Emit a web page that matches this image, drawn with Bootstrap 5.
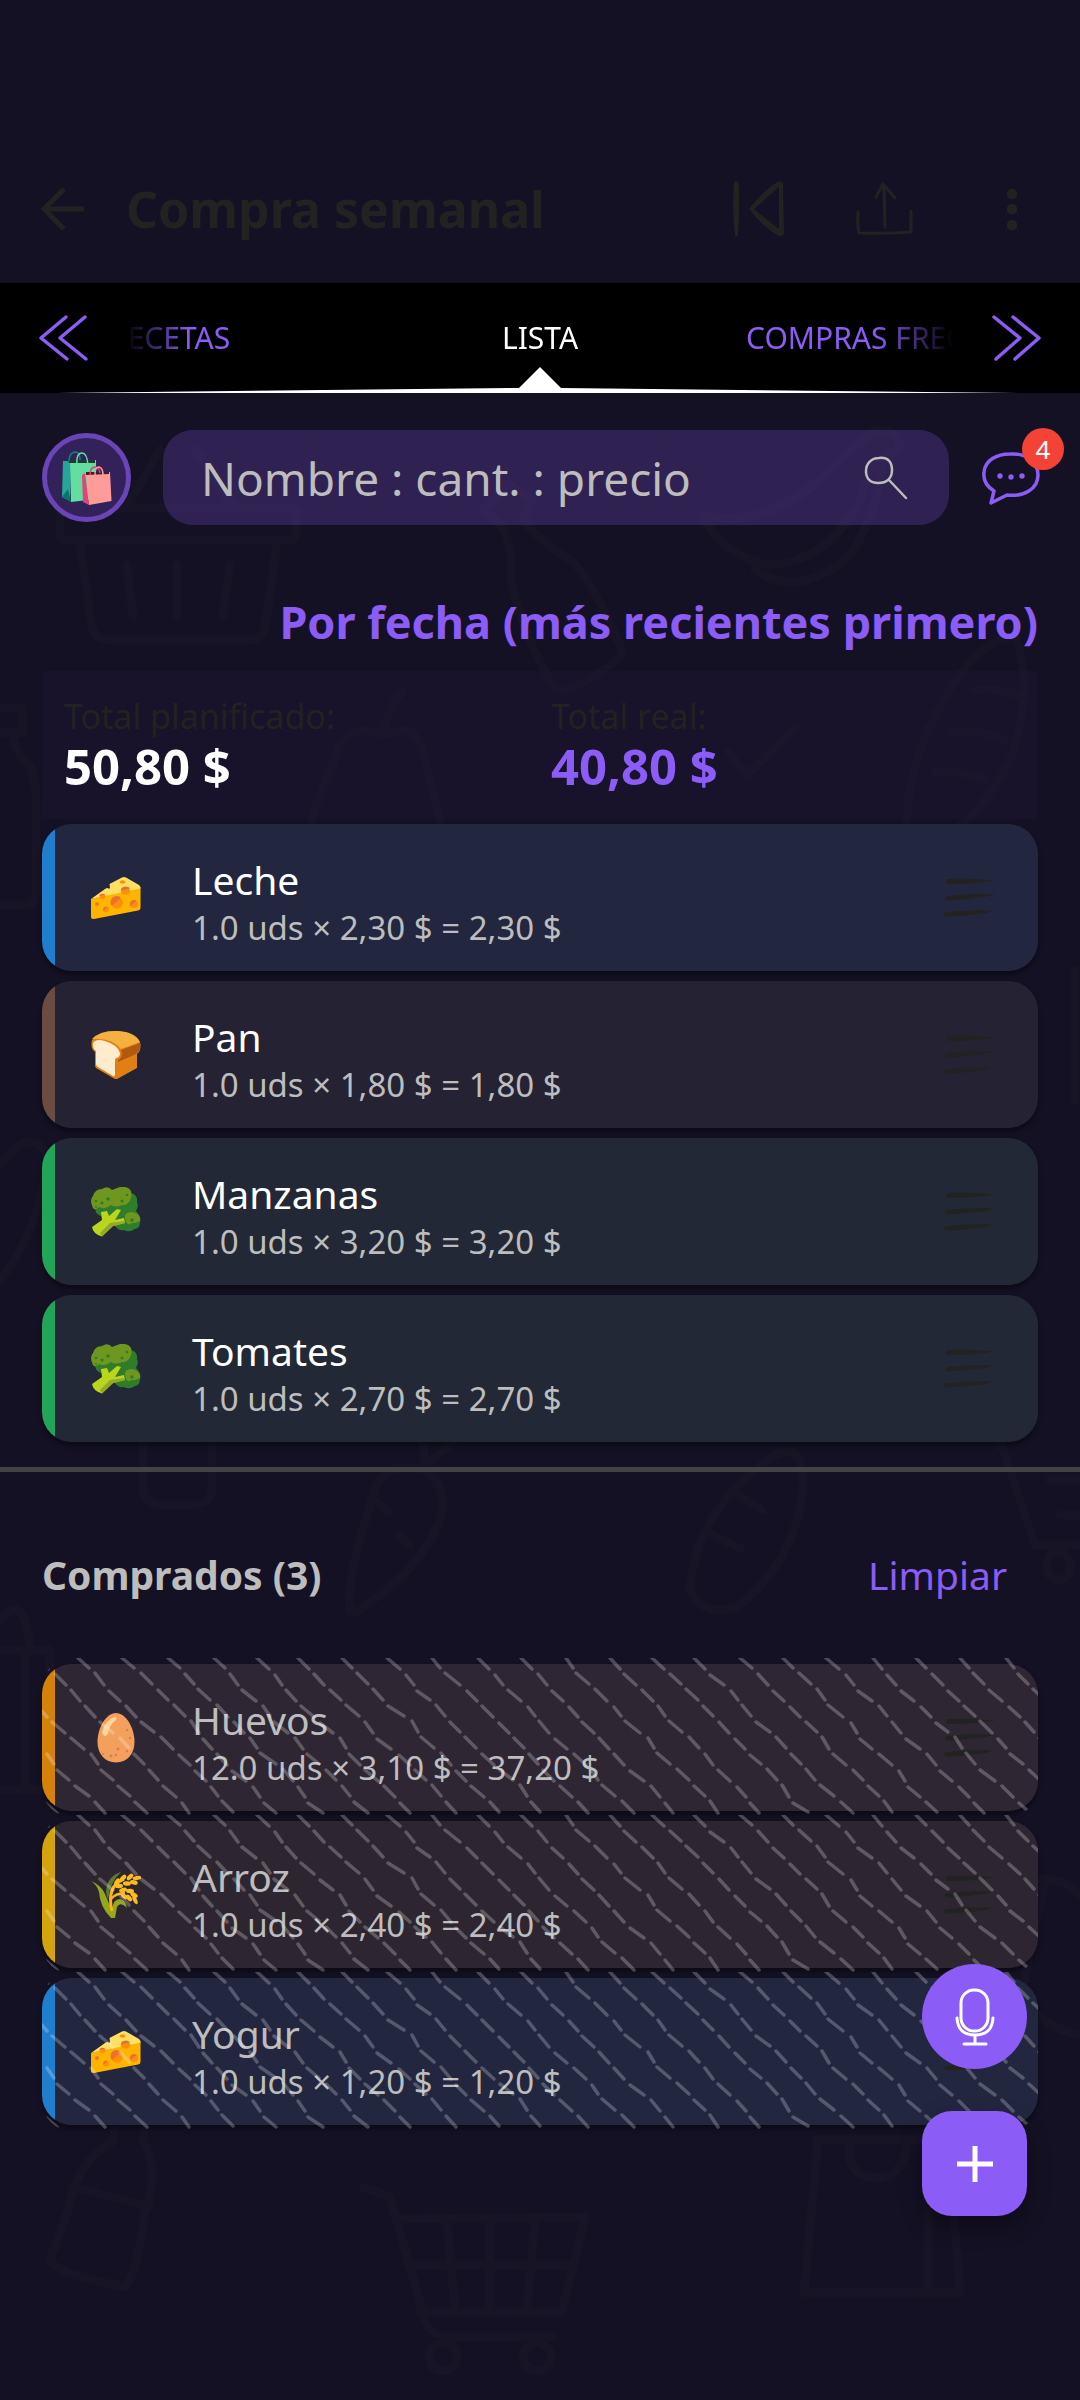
<!DOCTYPE html>
<html lang="es">
<head>
<meta charset="utf-8">
<meta name="viewport" content="width=device-width, initial-scale=1">
<title>Compra semanal</title>
<link href="https://cdn.jsdelivr.net/npm/bootstrap@5.3.0/dist/css/bootstrap.min.css" rel="stylesheet">
<style>
  :root { --violet: #8b5cf6; --ink: #222220; --muted: #bdbdbd; }
  body { background: #141124; color: #fff; font-family: "Noto Sans", "Open Sans", sans-serif; min-height: 100vh; }
  .plain { background: none; border: 0; padding: 0; display: flex; color: inherit; }
  svg { display: block; flex: none; }
  .doodles { position: absolute; inset: 0; z-index: -1; overflow: hidden; }
  .doodles svg { stroke: #171426; stroke-width: 9; fill: none; stroke-linecap: round; stroke-linejoin: round; }

  .topbar { padding: 135px 60px 0 40px; height: 283px; color: var(--ink); background: #141124; }
  .topbar h1 { font-size: 50px; line-height: 64px; font-weight: 700; margin: 0 0 0 38px; }
  .topbar .actions { gap: 64px; }

  .tabstrip { background: #000; height: 110px; padding: 0 36px; position: relative; color: var(--violet); }
  .tabview { overflow: hidden; margin: 0 34px; font-size: 30px; line-height: 40px; white-space: nowrap;
    -webkit-mask-image: linear-gradient(90deg, transparent, #000 64px, #000 calc(100% - 80px), transparent);
    mask-image: linear-gradient(90deg, transparent, #000 64px, #000 calc(100% - 80px), transparent); }
  .tabview a { color: var(--violet); text-decoration: none; }
  .tabview a.current { color: #fff; }
  .tabside { flex: 1 1 0; min-width: 0; }
  .tabside.before a { margin-left: -17px; }
  .tabside.after a { margin-left: 168px; }
  .marker { position: absolute; left: 0; bottom: 0; width: 100%; height: 26px; }

  .content-pad { padding-left: 42px; padding-right: 42px; }
  .searchrow { padding: 37px 40px 0 42px; }
  .avatar { width: 89px; height: 89px; border: 5px solid #6a45b8; border-radius: 50%; background: #33225a; align-items: center; justify-content: center; }
  .searchbox { height: 95px; border-radius: 30px; background: #8b5cf63a; margin: 0 31px 0 32px; padding: 0 40px 0 38px; }
  .searchbox input { background: none; border: 0; outline: 0; min-width: 0; color: #fff; font-size: 46px; line-height: 60px; padding: 0; }
  .searchbox input::placeholder { color: var(--muted); opacity: 1; }
  .count { position: absolute; top: -22px; right: -24px; width: 42px; height: 42px; border-radius: 50%; background: #f44336; color: #fff; font-size: 26px; line-height: 42px; text-align: center; }
  .sortline { margin-top: 67px; font-size: 45px; line-height: 60px; font-weight: 700; color: var(--violet); justify-content: flex-end; width: 100%; }

  .totals { margin-top: 19px; padding: 23px 22px 25px; background: #8b3cd609; display: grid; grid-template-columns: 1fr 1fr; column-gap: 22px; }
  .totals dt { font-size: 34px; line-height: 44px; font-weight: 400; color: var(--ink); }
  .totals dd { font-size: 49px; line-height: 56px; font-weight: 700; margin: 0; }
  .totals .real { color: var(--violet); }

  .items { gap: 10px; margin: 0; padding: 0; list-style: none; }
  .pending { margin-top: 5px; }
  .item { position: relative; border-radius: 30px; box-shadow: 0 4px 5px #0006; background: linear-gradient(90deg, var(--strip) 13px, var(--face) 13px); padding: 0 42px 0 49px; }
  .item .words { padding: 31px 0 22px 51px; }
  .item h2 { font-size: 39px; line-height: 50px; font-weight: 400; margin: 0 0 2px; }
  .item p { font-size: 33px; line-height: 42px; margin: 0; color: var(--muted); }
  .bought h2 { color: var(--muted); }
  .dairy { --strip: #207ece; --face: #22263f; }
  .bakery { --strip: #6a4c43; --face: #252234; }
  .greens { --strip: #22a558; --face: #222835; }
  .eggs { --strip: #d5820b; --face: #2e2632; }
  .grain { --strip: #d4a40f; --face: #2d2631; }
  .hatch { position: absolute; left: 0; right: 0; top: -6px; bottom: -6px; border-radius: 30px; overflow: hidden; pointer-events: none; }
  .hatch svg { width: 100%; height: 100%; }
  .split { border: 0; height: 5px; margin: 25px 0 0; background: #444244; opacity: 1; }
  .boughthead { margin-top: 77px; margin-bottom: 63px; font-size: 39px; line-height: 52px; }
  .boughthead h3 { font-size: 39px; line-height: 52px; font-weight: 700; color: var(--muted); margin: 0; }
  .boughthead button { color: var(--violet); margin-right: 31px; }

  .fabs { position: fixed; right: 53px; bottom: 184px; gap: 42px; z-index: 5; }
  .fabs button { width: 105px; height: 105px; border: 0; padding: 0; background: var(--violet); display: flex; align-items: center; justify-content: center; border-radius: 30px; box-shadow: 0 10px 22px #0006; }
  .fabs .voice { border-radius: 50%; box-shadow: none; }
</style>
<script src="https://cdn.jsdelivr.net/npm/bootstrap@5.3.0/dist/js/bootstrap.bundle.min.js" defer></script>
</head>
<body class="position-relative">

<svg width="0" height="0" class="position-absolute" aria-hidden="true">
  <symbol id="cheese" viewBox="0 0 50 50">
    <path d="M0 26 L0 44 Q0 46.500 3 46 L47 37.500 Q49.500 37 49.500 35 V14z" fill="#ffb400"/>
    <path d="M0 26 L14 16 Q17 14 18 16 L19 15 L18.500 11 L31 4.500 Q33 3.500 35 4.500 L48 12 Q49.500 13 49.500 15.500z" fill="#ffe063"/>
    <ellipse cx="31.500" cy="9" rx="2.800" ry="1.800" fill="#ff8f0a"/>
    <ellipse cx="11.500" cy="23.500" rx="3" ry="2.500" fill="#ff8f0a"/><path d="M8.500 23 a3 2.500 0 0 1 5.500-1.200z" fill="#e0703a"/>
    <ellipse cx="34.500" cy="18" rx="4.800" ry="3.700" fill="#ff8f0a"/><path d="M30 17.500 a4.800 3.700 0 0 1 9-2z" fill="#e0703a"/>
    <circle cx="26" cy="30" r="5.800" fill="#ff8f0a"/><path d="M21 33 a5.800 5.800 0 0 1 9-8z" fill="#ee7030"/>
    <circle cx="43" cy="31" r="4" fill="#ff8f0a"/><path d="M39.500 33 a4 4 0 0 1 6-5z" fill="#ee7030"/>
    <circle cx="15" cy="36.500" r="3" fill="#ff8f0a"/><path d="M12.500 38 a3 3 0 0 1 4-4z" fill="#ee7030"/>
    <circle cx="6" cy="31" r="2" fill="#ee7b20"/>
  </symbol>
  <symbol id="bread" viewBox="0 0 50 50">
    <path d="M1 10 Q10 0 27 1 Q46 3 49.500 14 Q50 21 46 24 V38 L27 48.500 Q25 49.500 23 48.500 L5 38 Q4 37 4 35 V22 Q-1 18 1 10z" fill="#e07f14"/>
    <path d="M1 9 Q9 0 27 1 Q44 2 49 12 L30 19 Q20 7 1 9z" fill="#f5b13f"/>
    <path d="M30 20 L49 13 Q50 21 45 24 L27 32 V30 Q33 26 30 20z" fill="#b0590f"/>
    <path d="M2 13 Q5 8 14 11 Q27 15 29 23 Q29 28 25 28 Q24 29 24 31 V44 Q24 47 22 46 L7 37 Q5 36 5 34 V21 Q1 18 2 13z" fill="#ffebcd"/>
  </symbol>
  <symbol id="broccoli" viewBox="0 0 50 50">
    <path d="M4 22 Q0 18 3 12 L40 6 Q47 8 46 15 Q48 20 45 24 Q51 30 49 35 Q49 41 44 42 Q38 46 33 43 Q27 44 24 39 L18 31 Q5 30 4 22z" fill="#2f7d2b"/>
    <path d="M2 21 Q-2 13 2 9 Q4 2 11 2 Q17 -2 21 3 Q26 1 29 0 Q37 -1 40 4 Q41 8 40 11 Q37 19 31 18 Q25 21 20 18 Q14 23 8 20 Q4 24 2 21z" fill="#6f9720"/>
    <path d="M34 31 Q33 25 41 25 Q50 27 49 34 Q43 37 40 36 Q36 40 34 31z" fill="#6f9720"/>
    <path d="M10 25 L16 24 L18 29 L26 22 L30 23 L24 33 L33 31 L34 36 L22 39 L11 49.500 Q2 47 1 40 L11 33z" fill="#b9d51d"/>
    <path d="M9 46 L19 36 L33 34 L34 36 L22 39 L11 49.500z" fill="#94a82a"/>
    <g fill="#2f7d2b"><circle cx="5" cy="14" r="1.300"/><circle cx="11" cy="16" r="1.500"/><circle cx="17" cy="12" r="1.800"/><circle cx="5" cy="20" r="1"/><circle cx="31" cy="14" r="1.500"/><circle cx="36" cy="8" r="1.300"/><circle cx="41" cy="33" r="1.800"/></g>
  </symbol>
  <symbol id="egg" viewBox="0 0 50 50">
    <path d="M25 0 C35 0 43.500 15 43.500 29 C43.500 41 36 49.500 25 49.500 S6.500 41 6.500 29 C6.500 15 15 0 25 0z" fill="#f2a05c"/>
    <path d="M24 4 Q15 6 11 19 Q13 26 17 21 Q18 12 25 7 Q26 4 24 4z" fill="#ffd39c"/>
    <g fill="#dc7c50"><circle cx="36" cy="17" r="1.200"/><circle cx="39" cy="25" r="1.200"/><circle cx="27" cy="36" r="1.400"/><circle cx="20" cy="43" r="1.500"/><circle cx="25" cy="42" r="1.200"/><circle cx="36" cy="38" r="1.200"/><circle cx="12" cy="41" r="1"/></g>
  </symbol>
  <symbol id="rice" viewBox="0 0 50 50">
    <path d="M30 2 Q16 6 15 22 L17 30 Q19 12 30 2z" fill="#5c7a35"/>
    <path d="M0 11 Q10 15 14 24 Q18 34 21 40 Q22 29 29 29 Q34 30 36 38 Q29 31 26 37 L24 48 L20 48 Q9 37 8 22 Q6 15 0 11z" fill="#93a81c"/>
    <path d="M21 41 Q15 16 33 9" fill="none" stroke="#f9b41a" stroke-width="3"/>
    <path d="M20 29 Q25 23 34 23" fill="none" stroke="#f9b41a" stroke-width="2.500"/>
    <g fill="#fdbc1d"><ellipse cx="26" cy="12" rx="4" ry="2.200" transform="rotate(-55 26 12)"/><ellipse cx="32" cy="8" rx="4" ry="2.200" transform="rotate(-45 32 8)"/><ellipse cx="39" cy="7" rx="4" ry="2.200" transform="rotate(-45 39 7)"/><ellipse cx="46" cy="8" rx="4.500" ry="2" transform="rotate(-10 46 8)"/><ellipse cx="28" cy="16" rx="4" ry="2.200" transform="rotate(-5 28 16)"/><ellipse cx="36" cy="13.500" rx="4" ry="2.200" transform="rotate(5 36 13)"/><ellipse cx="43" cy="12.500" rx="4" ry="2.200" transform="rotate(15 43 12)"/>
    <ellipse cx="32" cy="20" rx="4" ry="2.200" transform="rotate(-20 32 20)"/><ellipse cx="39" cy="21" rx="4" ry="2.200" transform="rotate(5 39 21)"/><ellipse cx="43" cy="25" rx="4" ry="2.200" transform="rotate(30 43 25)"/><ellipse cx="33" cy="26" rx="4" ry="2.200" transform="rotate(45 33 26)"/><ellipse cx="38" cy="28" rx="4" ry="2.200" transform="rotate(50 38 28)"/><ellipse cx="44" cy="30" rx="4.500" ry="2" transform="rotate(65 44 30)"/></g>
  </symbol>
  <symbol id="grip" viewBox="0 0 52 40">
    <path d="M2 3.500 Q2 1 5 1 Q30 0 51 2.500 Q30 6 5 6 Q2 6 2 3.500z M1 20.500 Q1 18 4 18 Q30 15 50 16.500 Q48 19 5 22.500 Q1 23 1 20.500z M0 36.500 Q0 34 4 34 Q30 31.500 48 32.500 Q46 36 5 38.500 Q0 39 0 36.500z" fill="#222220"/>
  </symbol>
  <symbol id="hatching" overflow="visible"><path id="hatchlines" fill="none" stroke="#fff" stroke-opacity=".24" stroke-width="3.500" stroke-linecap="round"/></symbol>
</svg>

<div class="doodles" aria-hidden="true">
<svg width="1080" height="2400" viewBox="0 0 1080 2400">
  <rect x="60" y="508" width="236" height="32" rx="6"/>
  <path d="M80 543 L92 628 Q95 640 110 640 H250 Q262 640 265 628 L277 543 M127 565 L133 616 M177 565 V616 M230 565 L223 616 M160 450 L128 505 M196 450 L232 505"/>
  <path d="M484 510 L508 484 L532 500 L522 520 Q545 545 570 560 Q590 575 622 650 Q624 662 565 691 Q555 692 548 678 Q520 625 511 580 Q512 540 500 525z"/>
  <path d="M703 515 Q760 530 820 480 Q860 440 875 430 Q905 430 898 450 Q870 460 860 500 Q830 560 770 565 Q720 555 703 515z M755 570 Q800 600 850 555 Q880 510 882 460"/>
  <path d="M312 820 Q320 790 333 765 Q340 730 365 730 Q385 738 400 730 Q420 728 427 768 L440 820 M382 735 Q388 708 402 692"/>
  <path d="M907 830 Q905 760 950 690 Q980 640 1015 636 Q1035 690 1010 760 Q985 810 945 838 M975 690 Q1000 687 1020 697 M952 732 Q980 728 1005 741 M935 772 Q960 770 985 780"/>
  <path d="M728 752 L747 775 L795 728"/>
  <path d="M0 708 H22 V733 H0 M14 735 Q12 750 30 765 Q36 780 36 800 V895 Q36 905 20 905 H0"/>
  <path d="M0 1165 Q30 1125 48 1155 Q40 1230 0 1280 M1075 970 V1100"/>
  <path d="M143 1440 V1490 Q145 1505 165 1505 H190 Q210 1505 212 1490 V1440"/>
  <path d="M350 1610 Q345 1580 375 1490 Q385 1460 425 1470 Q450 1490 440 1520 Q420 1570 365 1605 Q357 1615 350 1610z M375 1500 L388 1512 M400 1535 L410 1545 M425 1462 L422 1440 M430 1462 L455 1440"/>
  <path d="M775 1455 Q805 1440 803 1490 Q795 1560 740 1605 Q705 1620 690 1590 Q695 1510 775 1455z M738 1495 L762 1510 M712 1535 L740 1548"/>
  <path d="M1000 1440 L1035 1545 H1080 M1050 1480 H1080 M1060 1515 H1080 M1058 1552 a12 14 0 1 0 1 0"/>
  <path d="M0 1620 Q25 1590 30 1650 M0 1650 H50 V1790 H0 M25 1650 V1790"/>
  <path d="M115 2130 L112 2142 Q78 2160 68 2210 L50 2260 Q52 2272 125 2287 Q138 2270 145 2210 Q160 2170 143 2140 L145 2126 M72 2187 L150 2206"/>
  <path d="M363 2187 L390 2197 L425 2320 Q430 2336 450 2337 H552 M400 2219 L585 2217 L562 2312 H420 M408 2265 H572 M447 2220 L455 2310 M490 2220 V2310 M535 2220 L527 2310"/>
  <circle cx="443" cy="2357" r="14"/><circle cx="537" cy="2357" r="14"/>
  <path d="M818 2140 L804 2293 H960 L948 2140z M928 2150 V2290 M850 2142 V2160 Q855 2178 880 2178 Q905 2175 907 2142 M1040 1880 Q1060 1875 1080 1895 M1045 1880 L1020 2000 Q1050 2030 1080 2035"/>
</svg>
</div>

<header class="topbar d-flex align-items-center">
  <button class="plain" aria-label="Volver"><svg width="48" height="48" viewBox="0 0 48 48" fill="none" stroke="currentColor" stroke-width="5"><path d="M24 4 L4 24 L24 44 M4 24 H44"/></svg></button>
  <h1>Compra semanal</h1>
  <div class="actions ms-auto d-flex align-items-center">
    <button class="plain" aria-label="Anterior"><svg width="62" height="62" viewBox="0 0 62 62" fill="currentColor"><path d="M6 6 Q6 3 8 3 Q10 3 10.500 6 Q12 30 10 57 Q9 60 7 57 Q4 30 6 6z"/><path fill-rule="evenodd" d="M21 31 Q34 14 49 4 Q52 2 55 5 L56 56 Q53 60 49 57 Q34 48 21 31z M26 31 L51 51 V9z"/></svg></button>
    <button class="plain" aria-label="Compartir"><svg width="62" height="62" viewBox="0 0 62 62" fill="none" stroke="currentColor" stroke-width="3" stroke-linecap="round" stroke-linejoin="round"><path d="M4 34 Q3 46 5 55 Q30 56 57 54 L57 33 M31 49 L30 8 M22 19 L29 6 L41 20"/></svg></button>
    <button class="plain" aria-label="Más opciones"><svg width="40" height="48" viewBox="0 0 40 48" fill="currentColor"><circle cx="32" cy="9" r="5.200"/><circle cx="32" cy="24" r="5.200"/><circle cx="32" cy="40" r="5.200"/></svg></button>
  </div>
</header>

<nav class="tabstrip d-flex align-items-center" aria-label="Secciones">
  <button class="plain" aria-label="Pestaña anterior"><svg width="56" height="50" viewBox="0 0 56 50" fill="none" stroke="currentColor" stroke-width="3.500" stroke-linecap="round" stroke-linejoin="round"><path d="M30 4 L5 25 L31 46 M49 4 L24 25 L50 46"/></svg></button>
  <div class="tabview flex-grow-1 d-flex">
    <div class="tabside before"><a href="#recetas">RECETAS</a></div>
    <a href="#lista" class="current" aria-current="page">LISTA</a>
    <div class="tabside after"><a href="#frecuentes">COMPRAS FRECUENTES</a></div>
  </div>
  <button class="plain" aria-label="Pestaña siguiente"><svg width="56" height="50" viewBox="0 0 56 50" fill="none" stroke="currentColor" stroke-width="3.500" stroke-linecap="round" stroke-linejoin="round"><path d="M6 4 L32 25 L8 46 M25 4 L51 25 L27 46"/></svg></button>
  <svg class="marker" viewBox="0 0 1080 26" preserveAspectRatio="none" fill="#fff" aria-hidden="true"><path d="M57 26 L519 21 L540 0 L561 21 L1023 26z"/></svg>
</nav>

<main>
  <form class="searchrow d-flex align-items-center">
    <button type="button" class="plain avatar" aria-label="Tienda"><svg width="50" height="54" viewBox="0 0 50 54">
      <path d="M1 10 H9 L8 50 L0 46z" fill="#26a69a"/><path d="M8 10 L34 9 V48 L9 51z" fill="#63dda0"/><path d="M0 46 L6 38 L9 51z" fill="#00796b"/><path d="M6 9 H33 V12 H7z" fill="#1f3a35"/>
      <path d="M7 10 Q7 1 14 1 Q18 2 18 9" fill="none" stroke="#00897b" stroke-width="1.500"/><path d="M15 14 Q14 2 20 2 Q25 2 26 14" fill="none" stroke="#63dda0" stroke-width="1.500"/>
      <path d="M20 24 L23 22 L27 54 L21 51z" fill="#e0447c"/><path d="M24 23 L48 21 L49.500 50 L27 54z" fill="#ff9c9a"/><path d="M24 21 L47 21 V23 L24 24z" fill="#3a2028"/>
      <path d="M28 24 Q28 16 33 16 Q37 16 38 22" fill="none" stroke="#e0447c" stroke-width="1.500"/><path d="M33 24 Q33 16 37 16 Q41 17 41 24" fill="none" stroke="#ff9c9a" stroke-width="1.500"/></svg></button>
    <div class="searchbox flex-grow-1 d-flex align-items-center">
      <input class="flex-grow-1" type="text" aria-label="Añadir producto" placeholder="Nombre : cant. : precio">
      <button type="button" class="plain" aria-label="Buscar"><svg width="46" height="46" viewBox="0 0 46 46" fill="none" stroke="#bdbdbd" stroke-width="2.500" stroke-linecap="round"><path d="M16 3 C25 2 29 7 29 15 C29 23 24 28 15 28 C7 28 3 23 3 16 C3 9 8 3 16 3z M26 25 L43 43"/></svg></button>
    </div>
    <button type="button" class="plain position-relative" aria-label="Mensajes"><svg width="60" height="56" viewBox="0 0 60 56" fill="none" stroke="#8b5cf6" stroke-width="3.500" stroke-linejoin="round"><path d="M30 4 C46 3 58 12 58 25 C58 39 44 47 27 45 L11 53 L14 41 C6 36 3 30 4 22 C5 10 17 4 30 4z"/><g fill="#8b5cf6" stroke="none"><circle cx="20" cy="26" r="2.700"/><circle cx="31" cy="27" r="2.700"/><circle cx="42" cy="26" r="2.700"/></g></svg><span class="count">4</span></button>
  </form>

  <div class="content-pad">
    <button class="plain sortline">Por fecha (más recientes primero)</button>
    <dl class="totals mb-0">
      <div><dt>Total planificado:</dt><dd>50,80 $</dd></div>
      <div><dt>Total real:</dt><dd class="real">40,80 $</dd></div>
    </dl>
    <ul class="items pending d-flex flex-column">
      <li class="item dairy d-flex align-items-center"><svg width="50" height="50"><use href="#cheese"/></svg><div class="words flex-grow-1"><h2>Leche</h2><p>1.0 uds × 2,30 $ = 2,30 $</p></div><button class="plain" aria-label="Mover Leche"><svg width="52" height="40"><use href="#grip"/></svg></button></li>
      <li class="item bakery d-flex align-items-center"><svg width="50" height="50"><use href="#bread"/></svg><div class="words flex-grow-1"><h2>Pan</h2><p>1.0 uds × 1,80 $ = 1,80 $</p></div><button class="plain" aria-label="Mover Pan"><svg width="52" height="40"><use href="#grip"/></svg></button></li>
      <li class="item greens d-flex align-items-center"><svg width="50" height="50"><use href="#broccoli"/></svg><div class="words flex-grow-1"><h2>Manzanas</h2><p>1.0 uds × 3,20 $ = 3,20 $</p></div><button class="plain" aria-label="Mover Manzanas"><svg width="52" height="40"><use href="#grip"/></svg></button></li>
      <li class="item greens d-flex align-items-center"><svg width="50" height="50"><use href="#broccoli"/></svg><div class="words flex-grow-1"><h2>Tomates</h2><p>1.0 uds × 2,70 $ = 2,70 $</p></div><button class="plain" aria-label="Mover Tomates"><svg width="52" height="40"><use href="#grip"/></svg></button></li>
    </ul>
  </div>

  <hr class="split">

  <div class="content-pad">
    <div class="boughthead d-flex justify-content-between">
      <h3>Comprados (3)</h3>
      <button class="plain">Limpiar</button>
    </div>
    <ul class="items bought d-flex flex-column">
      <li class="item eggs d-flex align-items-center"><svg width="50" height="50"><use href="#egg"/></svg><div class="words flex-grow-1"><h2>Huevos</h2><p>12.0 uds × 3,10 $ = 37,20 $</p></div><button class="plain" aria-label="Mover Huevos"><svg width="52" height="40"><use href="#grip"/></svg></button><div class="hatch"><svg><use href="#hatching"/></svg></div></li>
      <li class="item grain d-flex align-items-center"><svg width="50" height="50"><use href="#rice"/></svg><div class="words flex-grow-1"><h2>Arroz</h2><p>1.0 uds × 2,40 $ = 2,40 $</p></div><button class="plain" aria-label="Mover Arroz"><svg width="52" height="40"><use href="#grip"/></svg></button><div class="hatch"><svg><use href="#hatching"/></svg></div></li>
      <li class="item dairy d-flex align-items-center"><svg width="50" height="50"><use href="#cheese"/></svg><div class="words flex-grow-1"><h2>Yogur</h2><p>1.0 uds × 1,20 $ = 1,20 $</p></div><button class="plain" aria-label="Mover Yogur"><svg width="52" height="40"><use href="#grip"/></svg></button><div class="hatch"><svg><use href="#hatching"/></svg></div></li>
    </ul>
  </div>
</main>

<div class="fabs d-flex flex-column">
  <button class="voice" aria-label="Dictar"><svg width="42" height="60" viewBox="0 0 42 60" fill="none" stroke="#fff" stroke-width="3" stroke-linecap="round"><rect x="7" y="3" width="27" height="41" rx="13"/><path d="M3 31 Q4 48 21 48 Q38 48 39 31 M21 48 V57 M10 57 H32"/></svg></button>
  <button aria-label="Añadir"><svg width="38" height="38" viewBox="0 0 38 38" fill="none" stroke="#fff" stroke-width="5"><path d="M19 1 V37 M1 19 H37"/></svg></button>
</div>

<script>
  // Hand-drawn diagonal dashes that cross out the bought products.
  let seed = 7;
  const wobble = size => ((seed = (seed * 16807) % 2147483647) / 2147483647 - 0.5) * size;
  const step = 16;
  const dashes = [];
  for (let x = -138; x < 2400; x += 44) {
    let from = [x + wobble(5), 0];
    for (let k = 1; k <= 10; k++) {
      const to = [x + k * step + wobble(8), k * step + wobble(2)];
      const end = [from[0] + (to[0] - from[0]) * 0.66, from[1] + (to[1] - from[1]) * 0.66];
      dashes.push(`M${from.map(Math.round).join(" ")}L${end.map(Math.round).join(" ")}`);
      from = to;
    }
  }
  document.getElementById("hatchlines").setAttribute("d", dashes.join(""));
</script>
</body>
</html>
